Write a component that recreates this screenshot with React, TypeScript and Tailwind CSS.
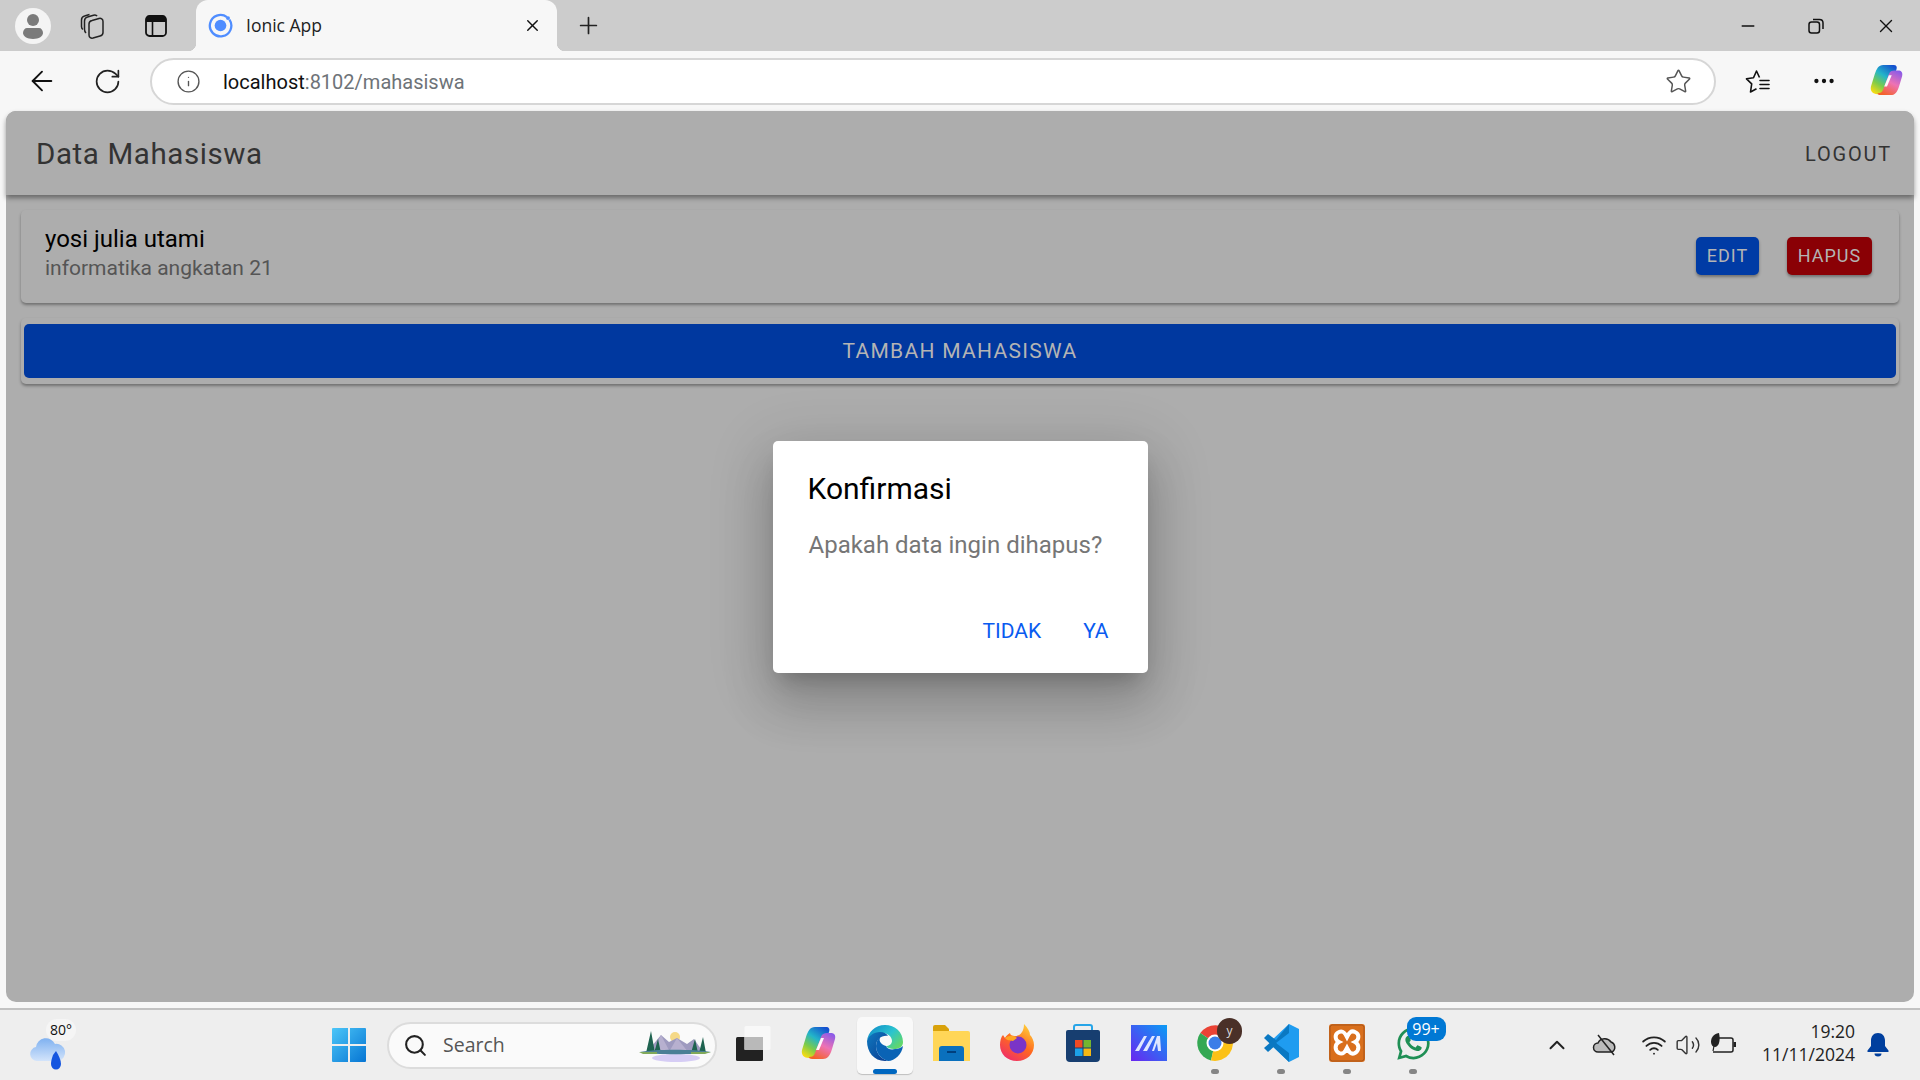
import { FC, ReactNode } from "react"
import { FaWhatsapp } from "react-icons/fa"
import {
  ArrowLeft,
  ChevronUp,
  Info,
  Minus,
  MoreHorizontal,
  Plus,
  RotateCw,
  Search,
  Star,
  Volume2,
  Wifi,
  X,
} from "lucide-react"

const uiFont = "font-['Open_Sans','Noto_Sans',sans-serif]"

const CopilotLogo: FC<{ size: number; id: string }> = ({ size, id }) => (
  <svg width={size} height={size} viewBox="0 0 36 36">
    <defs>
      <linearGradient id={`${id}-a`} x1="0.2" y1="1" x2="0.8" y2="0">
        <stop offset="0" stopColor="#f6dc12" />
        <stop offset="0.3" stopColor="#7ccb4a" />
        <stop offset="0.6" stopColor="#23b5c9" />
        <stop offset="1" stopColor="#1450cf" />
      </linearGradient>
      <linearGradient id={`${id}-b`} x1="0.8" y1="0" x2="0.3" y2="1">
        <stop offset="0" stopColor="#8a5be8" />
        <stop offset="0.5" stopColor="#ee72b4" />
        <stop offset="1" stopColor="#f4622a" />
      </linearGradient>
    </defs>
    <path d="M14 2h11c3 0 4 2 3 5l-8 21c-1 3-3 5-7 5H8c-5 0-8-3-7-8l4-13C7 6 9 2 14 2z" fill={`url(#${id}-a)`} />
    <path d="M22 34H11c-2 0-3-1-3-2 3 0 5-1 6-4l6-16c1-3 3-4 6-4h4c3 0 5 2 4 6l-3 10c-2 7-5 10-9 10z" fill={`url(#${id}-b)`} />
    <path d="M20 13h3l-5 12h-3z" fill="#fff" opacity="0.95" />
  </svg>
)

const IonicLogo = () => (
  <svg width="25" height="25" viewBox="0 0 24 24">
    <circle cx="12" cy="12" r="5.6" fill="#4f8dff" />
    <path d="M18.2 3.9A10.3 10.3 0 1 0 20.6 6.4" fill="none" stroke="#4f8dff" strokeWidth="2.2" />
    <circle cx="19.2" cy="4.9" r="1.9" fill="#4f8dff" />
  </svg>
)

const CollectionsIcon = () => (
  <svg width="26" height="26" viewBox="0 0 26 26" fill="none" stroke="#222" strokeWidth="1.5">
    <path d="M9 11c0-2 1-3 3-3.500l7-2c2-.5 4 .5 4 3v11c0 2-1 3-3 3.500l-7 2c-2 .5-4-.5-4-3z" />
    <path d="M6 20c-1-1-1.500-2-1.500-3.500V8c0-2 1-3.500 3-4l6-1.800c1.500-.4 3 0 3.500 1" />
    <path d="M2.800 16.500C2 15.800 1.500 15 1.500 13.500V7c0-2 1-3.500 3-4l5-1.500" />
  </svg>
)

const VerticalTabsIcon = () => (
  <svg width="22" height="22" viewBox="0 0 22 22">
    <rect x="1" y="1" width="20" height="20" rx="3.5" fill="none" stroke="#111" strokeWidth="1.8" />
    <path d="M1 4.5A3.5 3.5 0 0 1 4.5 1h13A3.5 3.5 0 0 1 21 4.5V7H1z" fill="#111" />
    <path d="M7.5 7v14" stroke="#111" strokeWidth="1.6" />
  </svg>
)

const RestoreIcon = () => (
  <svg width="16" height="16" viewBox="0 0 16 16" fill="none" stroke="#111" strokeWidth="1.5">
    <rect x="1" y="4" width="10.5" height="11" rx="2.5" />
    <path d="M5 1.500h6.500c2 0 3.500 1.500 3.500 3.500v6" />
  </svg>
)

const FavoritesIcon = () => (
  <svg width="25" height="25" viewBox="0 0 25 25" fill="none" stroke="#111" strokeWidth="1.6" strokeLinejoin="round">
    <path d="M14.500 8.500L11.500 2 8.500 8.800 1.500 9.800l5.200 5L5.500 23l6-3.200" />
    <path d="M15 11.500h9M15 15.500h9M15 19.500h9" strokeLinecap="round" />
  </svg>
)

const WeatherIcon = () => (
  <svg width="38" height="34" viewBox="0 0 38 34">
    <defs>
      <linearGradient id="cloud" x1="0" y1="0" x2="0" y2="1">
        <stop offset="0" stopColor="#7fb1f0" />
        <stop offset="1" stopColor="#d3e4fb" />
      </linearGradient>
    </defs>
    <path d="M8 25a7 7 0 0 1-1-13.900A10 10 0 0 1 26 8a8.500 8.500 0 0 1 3 17z" fill="url(#cloud)" />
    <path d="M27 15c3 5 5 9 5 13a5 5.500 0 0 1-10 0c0-3 1-6 2-9z" fill="#1556e0" />
  </svg>
)

const WindowsLogo = () => (
  <svg width="36" height="36" viewBox="0 0 36 36">
    <defs>
      <linearGradient id="win" x1="0" y1="0" x2="1" y2="1">
        <stop offset="0" stopColor="#4cc6f8" />
        <stop offset="1" stopColor="#0675d3" />
      </linearGradient>
    </defs>
    <path d="M1 2a1 1 0 0 1 1-1h15v16H1zM19 1h15a1 1 0 0 1 1 1v15H19zM1 19h16v16H2a1 1 0 0 1-1-1zM19 19h16v15a1 1 0 0 1-1 1H19z" fill="url(#win)" />
  </svg>
)

const SearchScenery = () => (
  <svg width="72" height="36" viewBox="0 0 72 36">
    <ellipse cx="37" cy="31" rx="24" ry="4" fill="#d6cdf5" />
    <circle cx="36" cy="10" r="5" fill="#f5d987" />
    <path d="M8 25l14-17 8 7 8-4 10 6 7-5 9 13z" fill="#9e9abf" />
    <path d="M22 8l9 17H14zM38 11l11 14H30z" fill="#b7b0cf" />
    <path d="M12 4l4 22H7zM19 12l3 14h-7zM56 12l3 14h-7zM64 10l3 16h-7z" fill="#1f6350" />
    <path d="M1 25c14-3 55-3 71 0-14 3-57 3-71 0z" fill="#4a7f96" />
    <path d="M0 25h18v2H4zM52 25h20l-6 2H52z" fill="#81a95a" />
  </svg>
)

const TaskViewIcon = () => (
  <svg width="36" height="36" viewBox="0 0 36 36">
    <rect x="1" y="12" width="27" height="24" rx="1.500" fill="#222" />
    <rect x="9.500" y="1" width="26" height="24" rx="1.500" fill="#f8f8f8" />
    <rect x="9.500" y="12" width="18.500" height="13" fill="#b9b9b9" />
  </svg>
)

const EdgeLogo = () => (
  <svg width="38" height="38" viewBox="0 0 38 38">
    <defs>
      <linearGradient id="edge-a" x1="0" y1="0" x2="1" y2="0.700">
        <stop offset="0" stopColor="#0d86c9" />
        <stop offset="0.600" stopColor="#2bc4cf" />
        <stop offset="1" stopColor="#61d66b" />
      </linearGradient>
      <linearGradient id="edge-b" x1="0" y1="0" x2="1" y2="1">
        <stop offset="0" stopColor="#0f7ac0" />
        <stop offset="1" stopColor="#0b3a90" />
      </linearGradient>
    </defs>
    <path d="M19 1c10 0 18 7 18 17 0 5-4 7-9 7-4 0-7-1-8-3 3 0 6-2 6-5 0-5-5-8-10-8C8 9 2 13 1 17 2 8 9 1 19 1z" fill="url(#edge-a)" />
    <path d="M1 17c1-5 7-9 13-9 4 0 7 2 8 4-6-1-12 3-12 10 0 7 5 13 12 15h-3C8 37 1 28 1 17z" fill="url(#edge-b)" />
    <path d="M20 22c1 3 5 4 9 3 3 0 6-1 8-3-1 8-8 15-15 15-7-2-12-8-12-15 0-4 2-8 5-10-3 4-1 8 5 10z" fill="#0a63b5" />
  </svg>
)

const FolderIcon = () => (
  <svg width="37" height="36" viewBox="0 0 37 36">
    <path d="M0 2a2 2 0 0 1 2-2h10l4 4v4H0z" fill="#d9a20b" />
    <path d="M0 6h35a2 2 0 0 1 2 2v28H0z" fill="#ffd657" />
    <path d="M6 36V24a3 3 0 0 1 3-3h19a3 3 0 0 1 3 3v12z" fill="#0a70bd" />
    <path d="M14 27h9" stroke="#003f7d" strokeWidth="2" />
  </svg>
)

const FirefoxLogo = () => (
  <svg width="36" height="38" viewBox="0 0 36 38">
    <defs>
      <linearGradient id="fx" x1="0.800" y1="0" x2="0.200" y2="1">
        <stop offset="0" stopColor="#ffd23a" />
        <stop offset="0.500" stopColor="#ff6a1f" />
        <stop offset="1" stopColor="#ee2a6c" />
      </linearGradient>
    </defs>
    <path d="M25 0c4 4 6 8 6 11 2 2 4 6 4 10 0 9-7 16-17 16S1 30 1 21c0-4 1-8 3-10l2 3c1-2 3-4 5-5 0 2 2 3 5 3 5 0 9-4 9-12z" fill="url(#fx)" />
    <circle cx="19" cy="21" r="8.500" fill="#7a34c7" />
    <path d="M6 14c4-3 9-3 12 0l-4 3c-3-1-6 0-8-3z" fill="#ffa524" />
  </svg>
)

const StoreIcon = () => (
  <svg width="36" height="38" viewBox="0 0 36 38">
    <path d="M9 8V3a2 2 0 0 1 2-2h14a2 2 0 0 1 2 2v5" fill="none" stroke="#27a5e8" strokeWidth="2" />
    <path d="M1 8a2 2 0 0 1 2-2h30a2 2 0 0 1 2 2v26a4 4 0 0 1-4 4H5a4 4 0 0 1-4-4z" fill="#173e70" />
    <rect x="10" y="16" width="7.500" height="7.500" fill="#ef4a23" />
    <rect x="18.500" y="16" width="7.500" height="7.500" fill="#74b52f" />
    <rect x="10" y="24.500" width="7.500" height="7.500" fill="#1ca2e8" />
    <rect x="18.500" y="24.500" width="7.500" height="7.500" fill="#f5b814" />
  </svg>
)

const MaterialIcon = () => (
  <svg width="36" height="36" viewBox="0 0 36 36">
    <defs>
      <linearGradient id="mat" x1="1" y1="0" x2="0" y2="1">
        <stop offset="0" stopColor="#0a9cf5" />
        <stop offset="1" stopColor="#6a26f0" />
      </linearGradient>
    </defs>
    <rect width="36" height="36" fill="url(#mat)" />
    <path d="M4 26L13 11h3L8 26zM12 26l9-15h3l-8 15zM21 26l5-15h3l1 15h-3l-1-8-3 8z" fill="#dfe6ff" />
  </svg>
)

const ChromeLogo = () => (
  <svg width="36" height="36" viewBox="0 0 36 36">
    <path d="M18 18L3.300 8A18 18 0 0 1 33.600 9z" fill="#ea4335" />
    <path d="M3.300 8A18 18 0 0 0 14 35.500L18 18z" fill="#34a853" />
    <path d="M33.600 9A18 18 0 0 1 14 35.500L18 18z" fill="#fbc116" />
    <circle cx="18" cy="18" r="8.500" fill="#fff" />
    <circle cx="18" cy="18" r="6.500" fill="#3b7de8" />
  </svg>
)

const VsCodeLogo = () => (
  <svg width="36" height="38" viewBox="0 0 36 38">
    <path d="M26 0l10 5v28l-10 5L8 21V17z" fill="#1f9cf0" />
    <path d="M26 0v9L13 19l13 10v9L1 14l4-4 8 6z" fill="#0a78c2" />
    <path d="M1 24l4 4 9-8-4-4z" fill="#0a78c2" />
  </svg>
)

const XamppLogo = () => (
  <svg width="36" height="38" viewBox="0 0 36 38">
    <rect width="36" height="38" rx="3" fill="#d96f1c" />
    <rect x="1" y="1" width="34" height="36" rx="2.500" fill="none" stroke="#a9561a" />
    <path d="M10 8c4-2 6 1 8 5 2-4 4-7 8-5 5 2 4 8 0 10 4 2 5 8 0 11-4 2-6-1-8-5-2 4-4 7-8 5-5-3-4-9 0-11-4-2-5-8 0-10z" fill="none" stroke="#fff" strokeWidth="4" />
  </svg>
)

const CloudOffIcon = () => (
  <svg width="26" height="22" viewBox="0 0 26 22">
    <path d="M6 18a4.500 4.500 0 0 1 0-9 7.500 7.500 0 0 1 13-1 5.500 5.500 0 0 1 1 10z" fill="#bbb" stroke="#222" strokeWidth="1.500" />
    <path d="M6 1l16 20" stroke="#222" strokeWidth="1.500" />
  </svg>
)

const BatteryLeafIcon = () => (
  <svg width="26" height="24" viewBox="0 0 26 24">
    <path d="M9 5h12a2 2 0 0 1 2 2v10a2 2 0 0 1-2 2H3" fill="none" stroke="#222" strokeWidth="1.500" />
    <path d="M23.500 9h2.500v5h-2.500z" fill="#222" />
    <path d="M9 0C3 1 1 5 1 9c0 3 2 5 4 5 3 0 6-5 4-14z" fill="#222" />
    <path d="M4 13l-1 5" stroke="#222" strokeWidth="1.200" />
  </svg>
)

const BellIcon = () => (
  <svg width="22" height="24" viewBox="0 0 22 24">
    <path d="M11 0c4.500 0 7 3.500 7 7.500V13l3.500 4.500V19H.5v-1.500L4 13V7.500C4 3.500 6.500 0 11 0z" fill="#003f9e" />
    <path d="M7.500 20.500h7a3.500 3 0 0 1-7 0z" fill="#003f9e" />
  </svg>
)

const TopIcon: FC<{ className: string; children: ReactNode }> = ({ className, children }) => (
  <div className={`flex items-center justify-center ${className}`}>{children}</div>
)

const TitleBar = () => (
  <div className="flex h-[51px] items-center bg-[#cccccc]">
    <div className="ml-[15px] flex h-9 w-9 items-center justify-center rounded-full bg-[#f4f4f4]">
      <svg width="22" height="26" viewBox="0 0 22 26" fill="#7b7b7b">
        <circle cx="11" cy="7" r="6" />
        <path d="M1 20c0-3 2-5 4-5h12c2 0 4 2 4 5 0 3-4 6-10 6S1 23 1 20z" />
      </svg>
    </div>
    <TopIcon className="ml-[29px] w-[26px]">
      <CollectionsIcon />
    </TopIcon>
    <TopIcon className="ml-[37px] w-[26px]">
      <VerticalTabsIcon />
    </TopIcon>
    <div className={`relative ml-[27px] flex h-full w-[361px] items-center rounded-t-xl bg-[#f7f7f7] ${uiFont}`}>
      <span className="absolute bottom-0 left-[-8px] h-2 w-2 bg-[radial-gradient(circle_at_0_0,#cccccc_8px,#f7f7f7_8.5px)]" />
      <span className="absolute bottom-0 right-[-8px] h-2 w-2 bg-[radial-gradient(circle_at_100%_0,#cccccc_8px,#f7f7f7_8.5px)]" />
      <div className="ml-3">
        <IonicLogo />
      </div>
      <span className="ml-[13px] text-[17.5px] text-[#222]">Ionic App</span>
      <X className="ml-auto mr-[15px]" size={19} strokeWidth={1.8} color="#111" />
    </div>
    <Plus className="ml-[18px]" size={27} strokeWidth={1.5} color="#222" />
    <div className="ml-auto flex items-center">
      <Minus size={20} strokeWidth={1.6} color="#111" />
      <div className="ml-[50px]">
        <RestoreIcon />
      </div>
      <div className="ml-[51px] mr-[23px]">
        <X size={22} strokeWidth={1.5} color="#111" />
      </div>
    </div>
  </div>
)

const Toolbar = () => (
  <div className="flex h-[60px] items-center bg-[#f7f7f7]">
    <ArrowLeft className="ml-[26px]" size={32} strokeWidth={1.4} color="#111" />
    <RotateCw className="ml-[35px]" size={29} strokeWidth={1.4} color="#222" />
    <div className="ml-[28px] flex h-[47px] w-[1566px] items-center rounded-full border-2 border-[#d6d6d6] bg-white">
      <Info className="ml-[24px]" size={25} strokeWidth={1.3} color="#555" />
      <span className="ml-[22px] mt-px font-['Roboto',sans-serif] text-[20px] text-[#111]">
        localhost<span className="text-[#6e7378]">:8102/mahasiswa</span>
      </span>
      <Star className="ml-auto mr-[22px]" size={27} strokeWidth={1.3} color="#555" />
    </div>
    <div className="ml-[29px]">
      <FavoritesIcon />
    </div>
    <MoreHorizontal className="ml-[41px]" size={26} strokeWidth={2} color="#111" />
    <div className="ml-[33px] mt-[-2px]">
      <CopilotLogo size={34} id="top-copilot" />
    </div>
  </div>
)

const ConfirmDialog = () => (
  <div className="absolute inset-0 flex items-center justify-center">
    <div className="flex h-[232px] w-[375px] flex-col rounded-[5px] bg-white px-[35px] pt-[28px] shadow-[0_14px_19px_-9px_rgba(0,0,0,0.2),0_31px_49px_4px_rgba(0,0,0,0.14),0_12px_60px_10px_rgba(0,0,0,0.12)]">
      <h2 className="text-[30px] font-normal leading-[40px] text-black">Konfirmasi</h2>
      <p className="ml-px mt-[20px] text-[24px] leading-[32px] text-[#767676]">Apakah data ingin dihapus?</p>
      <div className="mt-[56px] flex justify-end gap-[42px] pr-[4px] text-[21px] leading-[28px] text-[#0a5bf0]">
        <span>TIDAK</span>
        <span>YA</span>
      </div>
    </div>
  </div>
)

const MahasiswaPage = () => (
  <div className="relative min-h-0 flex-1 rounded-[10px] bg-[#adadad] font-['Roboto',sans-serif]">
    <header className="flex h-[84px] items-center justify-between rounded-t-[10px] bg-[#adadad] pl-[30px] pr-[22px] pt-[2px] shadow-[0_3px_5px_rgba(0,0,0,0.4)]">
      <h1 className="text-[29.5px] font-normal tracking-[0.6px] text-[#333]">Data Mahasiswa</h1>
      <span className="text-[20px] tracking-[1.8px] text-[#333]">LOGOUT</span>
    </header>
    <div className="flex flex-col gap-[15px] px-[15px] pt-[15px]">
      <div className="flex h-[93px] items-center rounded-[5px] bg-[#adadad] pl-6 pr-[27px] shadow-[0_2px_3px_rgba(0,0,0,0.35)]">
        <div className="flex flex-col pb-[6px]">
          <span className="text-[24px] leading-[29px] text-black">yosi julia utami</span>
          <span className="text-[21px] leading-[28px] text-[#555]">informatika angkatan 21</span>
        </div>
        <button className="mb-[2px] ml-auto flex h-[38px] w-[63px] items-center justify-center rounded-[5px] bg-[#003ba5] text-[18px] tracking-[1px] text-[#b4b4b4] shadow-[0_2px_3px_rgba(0,0,0,0.35)]">
          EDIT
        </button>
        <button className="mb-[2px] ml-[28px] flex h-[38px] w-[85px] items-center justify-center rounded-[5px] bg-[#8a0005] text-[18px] tracking-[1px] text-[#b4b4b4] shadow-[0_2px_3px_rgba(0,0,0,0.35)]">
          HAPUS
        </button>
      </div>
      <div className="rounded-[5px] bg-[#adadad] px-[3px] py-[6px] shadow-[0_2px_3px_rgba(0,0,0,0.35)]">
        <button className="flex h-[54px] w-full items-center justify-center rounded-[5px] bg-[#00389f] pt-[2px] text-[21px] tracking-[1.3px] text-[#b4b4b4]">
          TAMBAH MAHASISWA
        </button>
      </div>
    </div>
    <ConfirmDialog />
  </div>
)

const TaskSlot: FC<{ children: ReactNode; active?: boolean; running?: boolean }> = ({ children, active, running }) => (
  <div className="relative flex h-[57px] w-[66px] items-center justify-center">
    {active && <span className="absolute inset-y-0 left-[5px] right-[5px] rounded-[5px] bg-[#f9f9f9] shadow-[0_1px_1px_rgba(0,0,0,0.2)]" />}
    <div className="relative mb-[4px] flex">{children}</div>
    {active && <span className="absolute bottom-0 left-[21px] h-[5px] w-[24px] rounded-full bg-[#0067c0]" />}
    {running && <span className="absolute bottom-0 left-[29px] h-[5px] w-[8px] rounded-full bg-[#858585]" />}
  </div>
)

const Taskbar = () => (
  <div className={`flex h-[72px] items-center border-t-2 border-[#c2c2c2] bg-[#eeeeee] ${uiFont}`}>
    <div className="relative ml-[29px] flex h-[50px] w-[302px] items-end">
      <WeatherIcon />
      <span className="absolute left-[17px] top-[-1px] rounded-full bg-[#f5f5f5] px-[4px] text-[14px] leading-[22px] text-[#111]">80°</span>
    </div>
    <WindowsLogo />
    <div className="ml-[20px] mr-[3px] flex h-[47px] w-[330px] items-center rounded-full border-2 border-[#dcdcdc] bg-[#fafafa] pl-[14px] pr-[4px]">
      <Search size={25} strokeWidth={2} color="#222" />
      <span className="ml-[15px] text-[19.5px] text-[#555]">Search</span>
      <div className="ml-auto">
        <SearchScenery />
      </div>
    </div>
    <TaskSlot>
      <TaskViewIcon />
    </TaskSlot>
    <TaskSlot>
      <CopilotLogo size={36} id="bar-copilot" />
    </TaskSlot>
    <TaskSlot active>
      <EdgeLogo />
    </TaskSlot>
    <TaskSlot>
      <FolderIcon />
    </TaskSlot>
    <TaskSlot>
      <FirefoxLogo />
    </TaskSlot>
    <TaskSlot>
      <StoreIcon />
    </TaskSlot>
    <TaskSlot>
      <MaterialIcon />
    </TaskSlot>
    <TaskSlot running>
      <ChromeLogo />
      <span className="absolute right-[-9px] top-[-7px] flex h-[26px] w-[25px] items-center justify-center rounded-full bg-[#4a3028] text-[12px] text-[#ddd]">y</span>
    </TaskSlot>
    <TaskSlot running>
      <VsCodeLogo />
    </TaskSlot>
    <TaskSlot running>
      <XamppLogo />
    </TaskSlot>
    <TaskSlot running>
      <FaWhatsapp size={37} color="#1f8f55" />
      <span className="absolute left-[12px] top-[-8px] flex h-[24px] w-[39px] items-center justify-center rounded-[9px] bg-[#0078d4] text-[16px] text-white">99+</span>
    </TaskSlot>
    <ChevronUp className="ml-[98px]" size={26} strokeWidth={1.8} color="#222" />
    <div className="ml-[22px]">
      <CloudOffIcon />
    </div>
    <Wifi className="ml-[23px]" size={26} strokeWidth={1.7} color="#222" />
    <Volume2 className="ml-[8px]" size={26} strokeWidth={1.3} color="#333" />
    <div className="ml-[9px]">
      <BatteryLeafIcon />
    </div>
    <div className="mb-[4px] ml-auto flex flex-col items-end text-[17.5px] leading-[23px] text-[#222]">
      <span>19:20</span>
      <span>11/11/2024</span>
    </div>
    <div className="ml-[12px] mr-[31px] flex">
      <BellIcon />
    </div>
  </div>
)

const App = () => (
  <div className="flex h-screen w-full flex-col overflow-hidden bg-[#f7f7f7]">
    <TitleBar />
    <Toolbar />
    <div className="flex min-h-0 flex-1 flex-col px-[6px] pb-[6px]">
      <MahasiswaPage />
    </div>
    <Taskbar />
  </div>
)

export default App
